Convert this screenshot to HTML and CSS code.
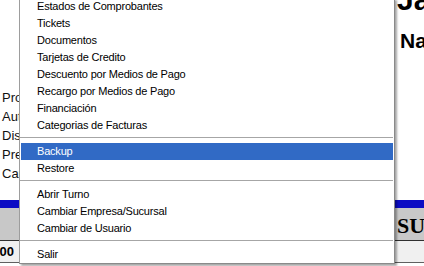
FILE: index.html
```html
<!DOCTYPE html>
<html lang="es">
<head>
  <meta charset="UTF-8" />
  <title>Menu Sistema</title>
  <link rel="stylesheet" href="styles.css">
</head>
<body>
  <div class="page">
    <div class="header">
      <div class="fields">
        <div>Proveedor</div>
        <div>Autorización</div>
        <div>Disponible</div>
        <div>Precio</div>
        <div>Cantidad</div>
      </div>
      <div class="title">
        <div class="brand">Japan</div>
        <div class="subtitle">Nacional</div>
      </div>
    </div>
    <div class="bar"></div>
    <div class="grid-head">
      <div class="col-right">SUCURSAL</div>
    </div>
    <div class="grid-row">
      <div class="col-left">0.00</div>
    </div>
  </div>

  <div class="menu">
    <div class="item">Estados de Comprobantes</div>
    <div class="item">Tickets</div>
    <div class="item">Documentos</div>
    <div class="item">Tarjetas de Credito</div>
    <div class="item">Descuento por Medios de Pago</div>
    <div class="item">Recargo por Medios de Pago</div>
    <div class="item">Financiación</div>
    <div class="item">Categorias de Facturas</div>
    <div class="sep"></div>
    <div class="item active">Backup</div>
    <div class="item">Restore</div>
    <div class="sep"></div>
    <div class="item">Abrir Turno</div>
    <div class="item">Cambiar Empresa/Sucursal</div>
    <div class="item">Cambiar de Usuario</div>
    <div class="sep"></div>
    <div class="item">Salir</div>
  </div>
</body>
</html>
```
FILE: styles.css
```css
* {
  box-sizing: border-box;
  margin: 0;
  padding: 0;
}
body {
  background-color: #ffffff;
  font-family: "Liberation Sans", Arial, sans-serif;
  width: 424px;
  height: 266px;
  overflow: hidden;
  position: relative;
}
.header {
  height: 200px;
  display: flex;
  justify-content: space-between;
}
.fields {
  padding-top: 88px;
  padding-left: 2px;
  font-size: 13px;
  line-height: 19px;
  color: #111;
  white-space: nowrap;
}
.title {
  width: 27px;
  overflow: hidden;
  white-space: nowrap;
  color: #000;
  font-weight: bold;
}
.brand {
  font-size: 30px;
  line-height: 30px;
  margin-top: -15px;
}
.subtitle {
  font-size: 21px;
  line-height: 24px;
  margin-top: 14px;
  padding-left: 3px;
}
.bar {
  height: 8px;
  background-color: #0c0cc4;
}
.grid-head {
  height: 33px;
  background-color: #c8c8c8;
  border-bottom: 1px solid #303030;
  display: flex;
  justify-content: flex-end;
}
.col-right {
  width: 27px;
  overflow: hidden;
  white-space: nowrap;
  font-family: "Liberation Serif", "Times New Roman", serif;
  font-weight: bold;
  font-size: 22px;
  line-height: 30px;
  padding-top: 3px;
}
.grid-row {
  height: 22px;
  background-color: #f0f0f0;
  border-bottom: 1px solid #606060;
}
.col-left {
  width: 14px;
  display: flex;
  justify-content: flex-end;
  overflow: hidden;
  white-space: nowrap;
  font-weight: bold;
  font-size: 13px;
  line-height: 22px;
}

/* Dropdown menu */
.menu {
  position: absolute;
  left: 19px;
  top: -2px;
  width: 376px;
  background-color: #ffffff;
  border-left: 1px solid #9d9d9d;
  border-right: 1px solid #8a8a8a;
  border-bottom: 1px solid #8a8a8a;
  padding: 0 1px;
  box-shadow: 2px 2px 2px rgba(0, 0, 0, 0.35);
  font-size: 11px;
  letter-spacing: -0.2px;
  color: #000;
}
.item {
  height: 17px;
  line-height: 17px;
  padding-left: 16px;
  white-space: nowrap;
}
.item.active {
  background-color: #316ac5;
  color: #ffffff;
}
.sep {
  height: 9px;
  padding-top: 3px;
}
.sep::before {
  content: "";
  display: block;
  border-top: 1px solid #a6a6a6;
  margin-left: -1px;
}
```
